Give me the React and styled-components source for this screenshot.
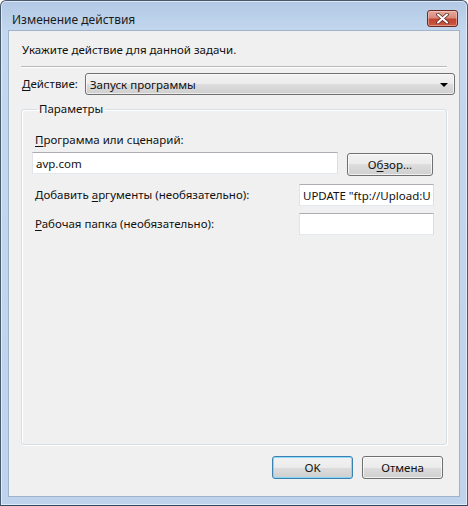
import React from 'react';
import styled, { createGlobalStyle } from 'styled-components';

const GlobalStyle = createGlobalStyle`
  html, body {
    margin: 0;
    padding: 0;
    background: #ffffff;
  }
  body {
    font-family: "Noto Sans", "Open Sans", sans-serif;
    font-size: 11.5px;
  }
`

const Window = styled.div`
  width: 468px;
  height: 506px;
  box-sizing: border-box;
  display: flex;
  flex-direction: column;
  border: 1px solid #4a5a6e;
  border-radius: 6px 6px 0 0;
  background: linear-gradient(#b2c9e5 0px, #c3d7ee 30px, #bfd4ec 100%);
  box-shadow: inset 0 0 0 1px rgba(255, 255, 255, 0.55);
  border-bottom-color: #2f4a5e;
`

const TitleBar = styled.div`
  height: 29px;
  flex: 0 0 auto;
  display: flex;
  align-items: center;
  justify-content: space-between;
  padding: 0 9px 0 11px;
  color: #1b1b1b;
  font-size: 12px;
`

const TitleText = styled.span`
  margin-top: 7px;
`

const CloseButton = styled.div`
  width: 29px;
  height: 15px;
  margin-top: 5px;
  border: 1px solid #6b2a22;
  border-radius: 3px;
  display: flex;
  align-items: center;
  justify-content: center;
  background: linear-gradient(#e5a99e 0%, #d98a7c 45%, #c2432f 55%, #c95a43 100%);
  box-shadow: inset 0 0 0 1px rgba(255, 220, 210, 0.45);
`

const Client = styled.div`
  flex: 1;
  margin: 0 7px 8px 7px;
  background: #f0f0f0;
  border: 1px solid #9fb3cc;
  display: flex;
  flex-direction: column;
  padding: 0 12px 0 12px;
  color: #111;
`

const Instruction = styled.div`
  line-height: 16px;
  margin-top: 11px;
  padding-left: 1px;
`

const Separator = styled.div`
  height: 0;
  border-top: 1px solid #b9b9b9;
  border-bottom: 1px solid #ffffff;
  margin-top: 8px;
`

const ActionRow = styled.div`
  display: flex;
  align-items: center;
  gap: 7px;
  margin-top: 5px;
  margin-right: -8px;
  padding-left: 1px;
`

const Label = styled.span`
  line-height: 16px;
  white-space: nowrap;
`

const Key = styled.span`
  text-decoration: underline;
  text-underline-offset: 2px;
`

const Combo = styled.div`
  flex: 1;
  height: 22px;
  box-sizing: border-box;
  border: 1px solid #707070;
  border-radius: 3px;
  display: flex;
  align-items: center;
  justify-content: space-between;
  padding: 0 6px 0 4px;
  background: linear-gradient(#f2f2f2 0%, #ebebeb 50%, #dddddd 50%, #cfcfcf 100%);
  box-shadow: inset 0 0 0 1px rgba(255, 255, 255, 0.6);
`

const Arrow = styled.span`
  width: 0;
  height: 0;
  border-left: 4px solid transparent;
  border-right: 4px solid transparent;
  border-top: 4px solid #000;
  margin-top: 1px;
`

const Group = styled.fieldset`
  flex: 1;
  margin: 6px 0 0 0;
  padding: 15px 12px 0 10px;
  border: 1px solid #d5dfe5;
  border-radius: 3px;
  box-shadow: inset 1px 1px 0 #ffffff, 1px 1px 0 #ffffff;
  display: flex;
  flex-direction: column;
  min-width: 0;
`

const Legend = styled.legend`
  padding: 0 2px;
  margin-left: 5px;
  line-height: 16px;
`

const FieldLabel = styled.div`
  line-height: 16px;
  padding-left: 3px;
`

const ProgramRow = styled.div`
  display: flex;
  align-items: flex-start;
  gap: 9px;
  margin-top: 4px;
`

const Input = styled.div`
  height: 22px;
  box-sizing: border-box;
  background: #ffffff;
  border: 1px solid #e3e9ef;
  border-top-color: #abadb3;
  border-left-color: #e2e3ea;
  border-right-color: #dbdfe6;
  display: flex;
  align-items: center;
  padding: 0 3px;
  overflow: hidden;
  white-space: nowrap;
  width: ${p => p.$width}px;
`

const Button = styled.div`
  width: ${p => p.$width}px;
  height: 23px;
  box-sizing: border-box;
  border: 1px solid ${p => (p.$default ? '#3c7fb1' : '#707070')};
  border-radius: 3px;
  display: flex;
  align-items: center;
  justify-content: center;
  background: linear-gradient(#f2f2f2 0%, #ebebeb 50%, #dddddd 50%, #cfcfcf 100%);
  box-shadow: inset 0 0 0 1px ${p => (p.$default ? 'rgba(120, 215, 250, 0.85)' : 'rgba(255, 255, 255, 0.7)')};
`

const ArgGrid = styled.div`
  display: grid;
  grid-template-columns: 1fr 135px;
  align-items: center;
  row-gap: 7px;
  margin-top: 8px;
`

const Footer = styled.div`
  display: flex;
  justify-content: flex-end;
  gap: 9px;
  margin: 11px 4px 17px 0;
`

export default function App() {
  return (
    <>
      <GlobalStyle />
      <Window>
        <TitleBar>
          <TitleText>Изменение действия</TitleText>
          <CloseButton>
            <svg width="13" height="11" viewBox="0 0 13 11">
              <path d="M2 1.5 L11 9.5 M11 1.5 L2 9.5" stroke="#5a2a22" strokeWidth="3.6" strokeLinecap="round" />
              <path d="M2 1.5 L11 9.5 M11 1.5 L2 9.5" stroke="#ffffff" strokeWidth="2" strokeLinecap="round" />
            </svg>
          </CloseButton>
        </TitleBar>
        <Client>
          <Instruction>Укажите действие для данной задачи.</Instruction>
          <Separator />
          <ActionRow>
            <Label><Key>Д</Key>ействие:</Label>
            <Combo>
              <span>Запуск программы</span>
              <Arrow />
            </Combo>
          </ActionRow>
          <Group>
            <Legend>Параметры</Legend>
            <FieldLabel><Key>П</Key>рограмма или сценарий:</FieldLabel>
            <ProgramRow>
              <Input $width={306}>avp.com</Input>
              <Button $width={86} style={{ marginTop: 1 }}>О<Key>б</Key>зор...</Button>
            </ProgramRow>
            <ArgGrid>
              <FieldLabel>Добавить <Key>а</Key>ргументы (необязательно):</FieldLabel>
              <Input $width={135}>UPDATE "ftp://Upload:U</Input>
              <FieldLabel><Key>Р</Key>абочая папка (необязательно):</FieldLabel>
              <Input $width={135} />
            </ArgGrid>
          </Group>
          <Footer>
            <Button $width={81} $default>OK</Button>
            <Button $width={81}>Отмена</Button>
          </Footer>
        </Client>
      </Window>
    </>
  );
}
